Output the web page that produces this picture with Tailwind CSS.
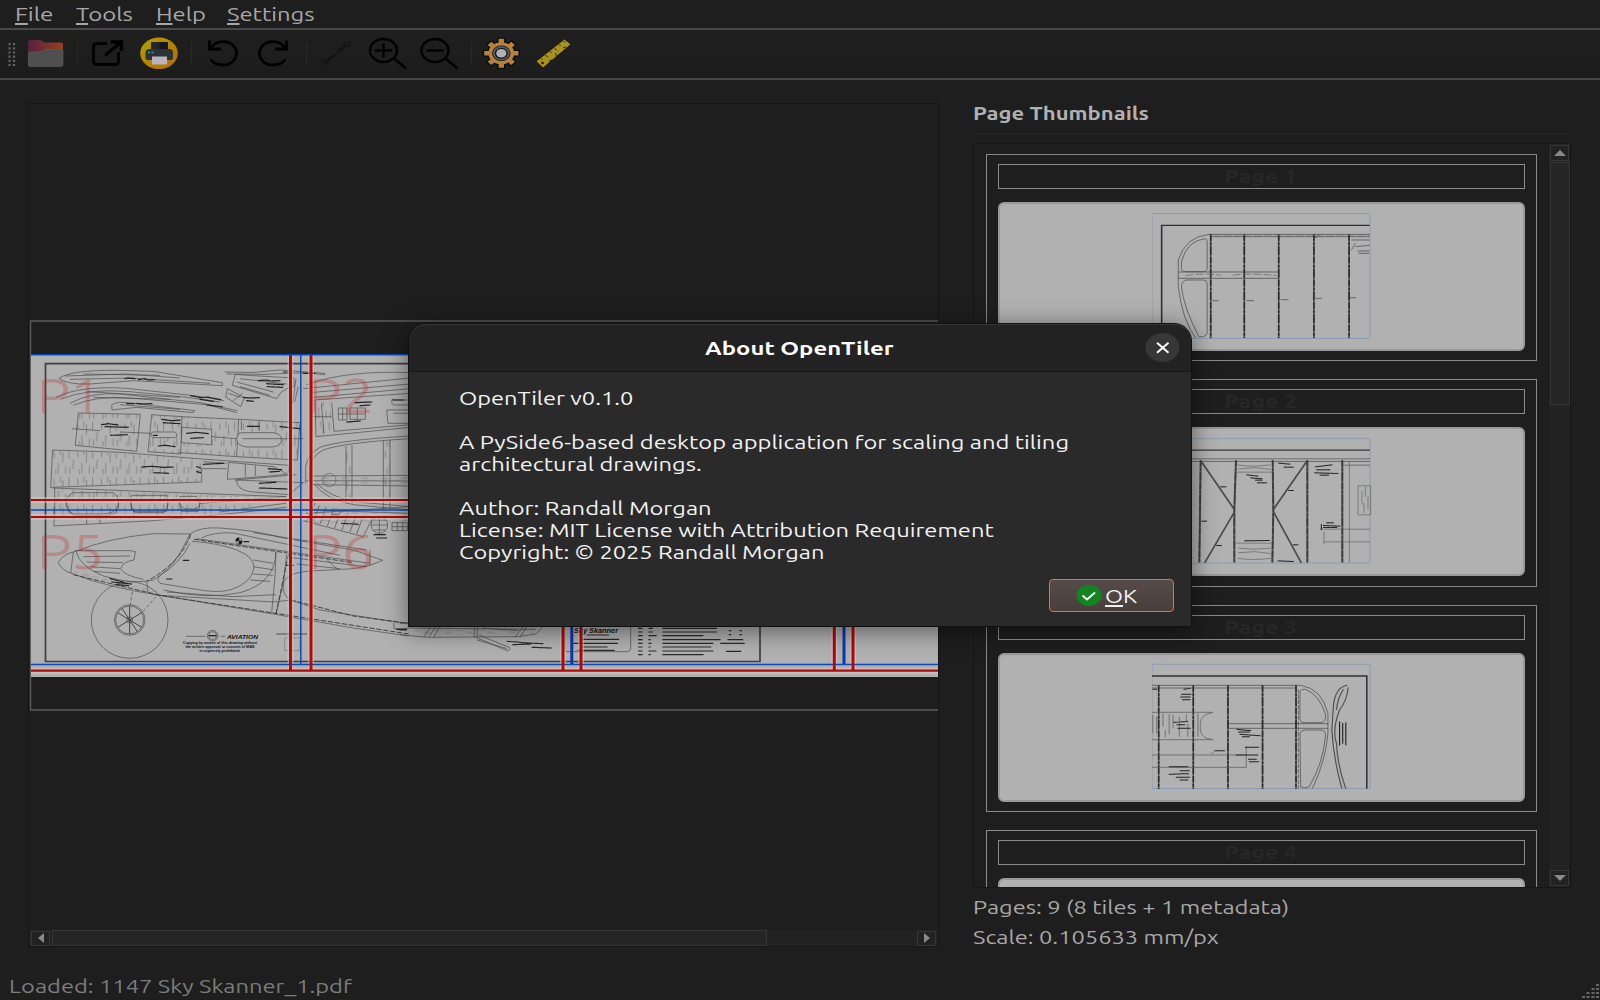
<!DOCTYPE html>
<html lang="en">
<head>
<meta charset="utf-8">
<title>OpenTiler</title>
<script src="https://cdn.jsdelivr.net/npm/@tailwindcss/browser@4"></script>
</head>
<body class="relative flex h-[1000px] w-[1600px] flex-col overflow-hidden bg-[#1e1e1e] font-['Ubuntu','Noto_Sans',sans-serif] text-[19px] leading-[22px] text-[#a8a8a8]">

<!-- Menu bar -->
<nav class="flex h-[30px] shrink-0 border-b-2 border-[#484848] pt-[3px] pl-[15px]">
  <div class="w-[61px]"><span class="inline-block origin-left scale-x-[1.28]"><span class="underline decoration-2 underline-offset-2">F</span>ile</span></div>
  <div class="w-[80px]"><span class="inline-block origin-left scale-x-[1.26]"><span class="underline decoration-2 underline-offset-2">T</span>ools</span></div>
  <div class="w-[71px]"><span class="inline-block origin-left scale-x-[1.25]"><span class="underline decoration-2 underline-offset-2">H</span>elp</span></div>
  <div><span class="inline-block origin-left scale-x-[1.25]"><span class="underline decoration-2 underline-offset-2">S</span>ettings</span></div>
</nav>

<!-- Toolbar -->
<div class="flex h-[50px] shrink-0 items-start border-b-2 border-[#484848] bg-linear-to-b from-[#1f1f1f] to-[#1c1c1c] pt-[7px]">
  <svg class="ml-[8px] h-8 w-[8px]" viewBox="8 37 8 32"><g stroke="#626262" stroke-width="2.2" stroke-dasharray="2.2 2"><path d="M9.5 43v23M14 43v23"/></g></svg>
  <svg class="ml-[12px] h-8 w-[36px]" viewBox="28 37 36 32">
    <defs><linearGradient id="fold"><stop offset="0" stop-color="#58203f"/><stop offset="1" stop-color="#96401f"/></linearGradient></defs>
    <path d="M28 42q0-2 2-2h9q2 0 3 1l2 1.500h17q2 0 2 2V58H28z" fill="url(#fold)"/>
    <path d="M28 54q0-2 2-2h9q2 0 4-1.300l2-1.200h16q2 0 2 2V64q0 2.500-2 2.500H30q-2 0-2-2.500z" fill="#4f4f4f" stroke="#606060" stroke-width=".6"/>
  </svg>
  <i class="ml-[13px] mt-[5px] h-[23px] w-px bg-[#292929]"></i>
  <svg class="ml-[14px] h-8 w-[33px]" viewBox="92 37 33 32" fill="none" stroke="#000" stroke-width="3"><path d="M107 43.500H97q-3.500 0-3.500 3.500V61q0 3.500 3.500 3.500h18q3.500 0 3.500-3.500V52"/><path d="M105 55.500L120 43M111 42h10.500v9" stroke-width="3.400"/></svg>
  <svg class="ml-[15px] h-8 w-[38px]" viewBox="140 37 38 32">
    <defs><linearGradient id="coin" x2="1" y2="1"><stop offset="0" stop-color="#b5a000"/><stop offset="1" stop-color="#b46a00"/></linearGradient></defs>
    <ellipse cx="159" cy="53.300" rx="18.800" ry="15.800" fill="url(#coin)"/>
    <path d="M151 42h17v10h-17z" fill="#23272b"/><path d="M145.500 53q0-4 4-4h19.500q4 0 4 4v5q0 2-2 2h-23.500q-2 0-2-2z" fill="#2c3238"/><path d="M159.500 42h8.500v7h-8.500z" fill="#14171b"/>
    <path d="M152 56.500h15v8h-15z" fill="#b7b5bb"/><path d="M148 52.500h2M151.500 52.500h2" stroke="#2ba5a5" stroke-width="1.300"/>
  </svg>
  <i class="ml-[13px] mt-[5px] h-[23px] w-px bg-[#292929]"></i>
  <svg class="ml-[14px] h-8 w-[34px]" viewBox="206 37 34 32" fill="none" stroke="#000" stroke-width="2.800"><path d="M209.500 40.500V49H221"/><path d="M210.500 48C214 43.500 218 41.700 223 41.700c8 0 13.500 5.300 13.500 11.500S231 65 223 65c-5.500 0-10-2-12.500-5.500"/></svg>
  <svg class="ml-[16px] h-8 w-[34px]" viewBox="256 37 34 32" fill="none" stroke="#000" stroke-width="2.800"><path d="M286.500 40.500V49H275"/><path d="M285.500 48C282 43.500 278 41.700 273 41.700c-8 0-13.500 5.300-13.500 11.500S265 65 273 65c5.500 0 10-2 12.500-5.500"/></svg>
  <i class="ml-[16px] mt-[5px] h-[23px] w-px bg-[#292929]"></i>
  <svg class="ml-[13px] h-8 w-[32px]" viewBox="320 37 32 32" fill="none" stroke="#131313"><path d="M325 62L335 54.500M337 52.500L347 44.500" stroke-width="2.400"/><path d="M322 58.500v5.500h6.500zM343 42.500l7-.5-.5 6z" stroke-width="1"/></svg>
  <svg class="ml-[16px] h-8 w-[40px]" viewBox="368 37 40 32" fill="none" stroke="#000" stroke-width="2.400"><ellipse cx="383.500" cy="50.500" rx="13.500" ry="11.500"/><path d="M394 58.500l12 10"/><path d="M375 50.500h17M383.500 43.500v14"/></svg>
  <svg class="ml-[11px] h-8 w-[40px]" viewBox="418.500 37 40 32" fill="none" stroke="#000" stroke-width="2.400"><ellipse cx="434.500" cy="50.500" rx="13.500" ry="11.500"/><path d="M445 58.500l12 10"/><path d="M426 50.500h17"/></svg>
  <i class="ml-[12px] mt-[5px] h-[23px] w-px bg-[#292929]"></i>
  <svg class="ml-[11px] h-8 w-[38px]" viewBox="483 37 38 32">
    <g transform="translate(501.300 53.300) scale(1.180 1)">
      <g stroke="#090909" stroke-width="6.500"><path d="M0-15.500V15.500M-15.500 0H15.500M-10.800-10.800L10.800 10.800M10.800-10.800L-10.800 10.800"/></g>
      <circle r="12.200" fill="#090909"/>
      <g stroke="#b5813b" stroke-width="4.500"><path d="M0-14.500V14.500M-14.500 0H14.500M-10-10L10 10M10-10L-10 10"/></g>
      <circle r="11" fill="#b5813b"/><circle r="7.800" fill="#14171c"/><circle r="6.300" fill="none" stroke="#565d6b" stroke-width="1.500"/><circle r="4.300" fill="#b1b1b1"/>
    </g>
  </svg>
  <svg class="ml-[13px] h-8 w-[38px]" viewBox="534 37 38 32"><path d="M536 61.300L564.500 39l6.500 5.300L543 68z" fill="#a8921d" stroke="#0c0c0c" stroke-width=".8"/><path d="M541 58.500l1.500 1.500M545.500 55l2.500 2.500M550 51.500l1.500 1.500M554.500 48l2.500 2.500M559 44.500l1.500 1.500M563.500 41l1.500 1.500M549 61l3-1M556.500 56.500l-1-3.500M563 48l3-1" stroke="#191604" stroke-width=".9"/><circle cx="542.500" cy="63" r="1.300" fill="#191604"/></svg>
</div>

<!-- Work area -->
<main class="flex h-[884px] shrink-0">
  <!-- Drawing view -->
  <section class="mt-[23px] ml-[28px] flex h-[844px] w-[911px] flex-col border border-[#151515]">
    <svg class="h-[826px] w-[909px] shrink-0" viewBox="29 104 909 826" fill="none">
      <defs>
        <pattern id="grainV" width="71" height="83" patternUnits="userSpaceOnUse"><path d="M5 4v26M19 34l-2 28M31 8l1 20M44 44v32M58 12l-1 30M8 56v20M66 54v22M36 62v16M50 2v18" stroke="#555" stroke-width="1.500"/></pattern>
        <pattern id="grainH" width="60" height="14" patternUnits="userSpaceOnUse"><path d="M2 3q14-3 27 0M34 8q10-3 22 0M8 12h14" stroke="#777" stroke-width="1.200"/></pattern>
      </defs>
      <path d="M938 321H30.500V710H938" stroke="#5c5c5c" stroke-width="1.400"/>
      <path d="M31 355H938V677H31z" fill="#b1b1b1"/>
      <path d="M45.500 661.500V363.700H760V661.500z" stroke="#3f3f3f" stroke-width="1.700"/>
      <!-- upper sheet: wing and fuselage parts -->
      <g transform="translate(20 310) scale(.33333)" stroke="#444" stroke-width="1.900">
        <path d="M117 205Q150 180 290 181L400 184 607 218V227L340 212 210 222Q140 224 117 205zM135 198L320 192 480 204M150 208L330 204 570 220M190 192L420 196" fill="none"/>
        <path d="M108 262Q180 226 320 235L530 258 612 272M122 268Q200 234 330 245L500 262 600 276M150 280Q210 246 300 252L540 278 652 302M160 286Q230 256 330 264L560 284 650 308M200 245L480 262M220 262L450 268M275 285Q290 272 340 280L525 302 520 308 350 292 276 300zM300 284L480 298"/>
        <path d="M614 186Q700 192 780 180L916 190M620 192Q730 196 850 188L915 194M646 193L637 226 770 266 782 248 808 232 822 230V204L700 197zM660 206L800 222M650 216L760 246M660 230L750 256M622 236L673 263 662 290 617 261zM625 250L662 262M640 272L668 250M828 206L818 280M835 230L824 275"/>
        <path d="M175 309L361 313 350 424 166 406zM155 356L240 362M300 366L395 370M395 314L486 320 482 432 384 425zM484 320L656 328 650 440 478 428M656 328L840 338 832 450 650 440"/>
        <path d="M175 309L361 313 350 424 166 406zM395 314L486 320 482 432 384 425zM484 320L840 335 832 450 478 428zM98 420L545 447V516L92 532zM885 270L935 278 942 364 888 380z" fill="url(#grainV)" stroke="none"/>
        <path d="M398 366H465Q476 374 465 383H398Q388 374 398 366zM486 352L575 358V404L484 398zM575 380L650 386M664 368H760Q788 372 784 394 778 412 750 411H680Q652 408 650 388 650 372 664 368zM668 386H850M664 332V360M718 334V362" fill="#b1b1b1"/>
        <path d="M98 420L300 427 545 447 808 466M98 420L92 532 545 516V476H620M626 457L622 508 750 498 804 492 806 472M676 463V500M706 466V498M626 457L760 470 800 492M646 510L830 494M650 512Q650 538 690 545L806 554 850 518 646 510M550 455L620 460"/>
        <path d="M98 534L800 560M104 534V628M160 548H280Q300 560 294 590 280 612 250 612H160Q138 600 138 580 140 555 160 548zM335 556H440Q448 580 440 604H340Q328 580 335 556zM480 560H530Q545 580 535 604H485Q475 580 480 560zM540 580L796 560V580L600 606M560 570L640 574"/>
        <path d="M98 536L560 556 800 562 640 602 500 620 300 630H104z" fill="url(#grainV)" stroke="none"/>
        <!-- tail and ribs beneath the second tile -->
        <path d="M860 224Q980 180 1170 188M850 236L1170 204M870 248L1170 222M880 262L1170 236M885 270L1170 250M885 270L888 380L1170 352M935 278L942 364 1170 344M904 280L912 370M880 320H935M1100 300H1170V340H1104zM1120 310H1170M1115 270H1170M1120 285Q1110 275 1120 265M1120 285H1170"/>
        <path d="M955 294h26v36h-26zM990 294h46v34h-46zM955 312h80M968 294v36M1012 294v34"/>
        <path d="M857 520V470Q865 430 900 412 960 390 1170 378M868 510V470Q876 438 910 420 970 398 1170 386M866 498L1170 496M860 512L1170 513M872 524L1170 528M880 520Q920 570 1000 584L1170 600M890 520Q930 562 1010 576L1170 590M978 408V580M996 406V580M1090 392V600M1110 390V600"/>
        <path d="M866 498H1170V528H866zM885 588L1170 606V640H870z" fill="url(#grainH)" stroke="none"/>
        <path d="M978 408h18v172h-18zM1090 392h20v208h-20z" fill="url(#grainV)" stroke="none"/>
        <circle cx="928" cy="510" r="20" stroke-width="1.400"/>
        <g stroke="#222" stroke-width="3.600" stroke-dasharray="6 1.500 9 1 3 2 12 1" stroke-linecap="round">
          <path d="M315 206l10-2 20 2M355 209l18-3 12 4 18-1M350 280l20 2 26-1M715 212l20-2 20 3 25-1M740 221l50 3M742 230l46 2M670 262l18 2 30-1M680 272l20 2M512 257l30 6 20-2 40 8M540 268l40 6M560 285l46 5M320 281h24M245 344l20-3 30 4M255 350l70 2M272 376l50-2M425 328l30 4 26-2M430 338l50 3M400 376h12M415 408l20-2 30 4M500 370l30-3 35 4M512 385l38-2M365 471l30-2 35 3 30-1M402 488l44 2M550 463l60-3M530 470l12 4M530 485l12 3M682 349h36M780 350l60 6M718 520l50-3M718 534l84 3M1005 278l50-2M1020 287l30-2M980 336l42-3M850 190h34M790 186h14M1120 270h30M745 476l40 3M748 486l30-2"/>
        </g>
      </g>
      <!-- lower sheet: fuselage side view -->
      <g transform="translate(20 500) scale(.33333)" stroke="#444" stroke-width="1.900">
        <path d="M102 20V78L400 62 640 40 800 22M140 8Q140 44 170 46H265Q300 40 296 8M334 8Q330 36 350 38H430Q446 26 442 8M478 8Q485 26 500 27H525Q540 22 540 8M200 46v27M240 46v24"/>
        <path d="M850 62L1030 110 1060 48M860 62L886 8M858 40L1170 20M880 30L1165 40M880 66l18-50M900 72l18-50M922 78l18-50M944 84l18-50M966 90l18-50M990 96l18-50M1010 102l18-50" />
        <path d="M115 188Q130 160 168 154 260 115 400 101L510 102Q540 80 600 84 700 90 780 112L1000 150 1088 181 1050 196 1000 206 890 212Q800 214 790 250 785 285 812 300L900 330 1166 372M115 188Q125 212 160 222 260 262 420 286L760 342 1000 384 1166 408M168 154Q180 200 250 228L300 240Q350 250 400 240 450 210 480 160L510 102M165 152H330L346 155 342 180Q310 184 302 206 310 226 370 238M160 156L152 220M190 170L330 168M200 186L310 188M210 200L300 206M220 214L300 220"/>
        <path d="M516 124Q600 130 650 150 704 170 702 204 695 250 630 270 590 280 530 268L420 250Q408 240 420 226 480 190 510 130M430 270Q560 300 660 278 765 250 768 156M530 116L1050 190M545 114Q580 95 640 99L960 166M700 98L1040 150M420 286L760 306 812 300M440 276L640 290 768 284M768 156L765 230 755 338M800 164L790 250 768 342M700 180L760 190M700 200L762 210M700 222L758 226M690 240L750 244M806 172L1040 200M830 192L960 206M920 178L950 206M1050 150V196M380 245L384 276Q400 286 420 286"/>
        <g stroke="#3a3a3a" stroke-width="2.800" stroke-dasharray="16 5"><path d="M512 104Q480 190 380 244M522 118L1000 188M160 224L420 286 1166 402M812 300L1000 348 1166 370M768 342L806 160"/></g>
        <path d="M160 220L300 262 420 288 430 274 300 248 170 210z" fill="url(#grainH)" stroke="none"/>
        <circle cx="329" cy="360" r="115"/><circle cx="329" cy="360" r="46"/><circle cx="329" cy="360" r="42"/><circle cx="329" cy="360" r="9"/>
        <path d="M329 318V402M293 338L365 382M293 382L365 338M306 325L352 395" stroke-width="3"/><path d="M337 276L330 320M408 290L364 340" stroke-dasharray="10 6"/>
        <circle cx="657" cy="123" r="9" fill="#b1b1b1"/><path d="M657 123V113A10 10 0 0 0 647 123zM657 123V133A10 10 0 0 0 667 123z" fill="#000"/>
        <circle cx="1078" cy="75" r="25"/><path d="M1053 75h50M1078 50v50M1060 60h36M1060 90h36M1116 68h46v24h-46zM1116 80h46M1132 68v24M1148 68v24"/>
        <path d="M794 414h46v38h-46z" stroke="#777"/><path d="M1122 368v18h40"/>
        <circle cx="578" cy="407" r="16"/><circle cx="578" cy="407" r="12"/><path d="M566 407h24M498 409h58M602 409h14"/>
        <g stroke="#222" stroke-width="3.400" stroke-dasharray="6 1.500 9 1 3 2 12 1" stroke-linecap="round"><path d="M672 125h14M935 44h20M965 70l50 3M1062 104h34M1070 114h30M270 236l40 10M275 246l60 6M290 254l36 3M440 237h16M490 181h16M800 196h22M568 407h20M1130 388h30"/><path d="M770 402h90" stroke-width="2"/></g>
      </g>
      <g fill="#111" font-family="Liberation Sans" font-weight="700" text-anchor="middle">
        <text x="242.500" y="638.500" font-size="6" font-style="italic" textLength="31" lengthAdjust="spacingAndGlyphs">AVIATION</text>
        <text x="220" y="644" font-size="3.600" textLength="74" lengthAdjust="spacingAndGlyphs">Copying by means of this drawing without</text>
        <text x="220" y="648.200" font-size="3.600" textLength="69" lengthAdjust="spacingAndGlyphs">the written approval or consent of MAN</text>
        <text x="220" y="652.400" font-size="3.600" textLength="41" lengthAdjust="spacingAndGlyphs">is expressly prohibited.</text>
      </g>
      <!-- title block and rear fuselage -->
      <g transform="translate(400 600) scale(.35714 .33333)" stroke="#444" stroke-width="1.900">
        <path d="M0 70L90 60 240 62 410 70 380 102 330 110 80 112 0 104M20 84L380 88M88 76L68 110M112 78L94 112M102 76L82 110M208 70V112M216 72V112M345 80L322 112M356 78L336 112M212 112L300 152Q312 150 306 142L222 106M216 120L300 146M230 84L330 92M462 150V60M462 150Q462 155 470 155H636Q646 154 646 144V60"/>
        <path d="M20 78L380 86 370 104 80 108z" fill="url(#grainH)" stroke="none"/>
        <g stroke="#2a2a2a" stroke-width="3.400" stroke-dasharray="6 1.500 9 1 3 2 12 1" stroke-linecap="round"><path d="M300 124l30 2 30 4M316 134l50-2M340 128l60 3M370 142l54 2M524 105h60M512 118h100M486 130h124M506 141h74M498 151h102M0 90h18"/>
        <path d="M668 85h10M668 96h10M668 107h10M668 119h10M668 130h10M668 141h10M668 153h10M668 164h10M697 85h10M697 96h10M697 107h22M697 119h4M697 130h6M697 141h4M697 153h20M697 164h4M736 85h150M736 96h150M736 107h112M736 119h160M736 130h140M736 141h134M736 153h140M736 164h114M918 119h42M898 130h66M914 154h40M922 92h4M952 92h4M922 104h4M952 104h4"/></g>
      </g>
      <text x="574" y="632.800" fill="#111" font-family="Liberation Sans" font-weight="700" font-style="italic" font-size="7" textLength="44" lengthAdjust="spacingAndGlyphs">Sky Skanner</text>
      <!-- tile labels -->
      <g fill="#c02020" fill-opacity=".27" font-family="Ubuntu, Noto Sans" font-size="48">
        <text x="37" y="413" textLength="64" lengthAdjust="spacingAndGlyphs">P1</text>
        <text x="307" y="413" textLength="67" lengthAdjust="spacingAndGlyphs">P2</text>
        <text x="37" y="569" textLength="67" lengthAdjust="spacingAndGlyphs">P5</text>
        <text x="307" y="569" textLength="67" lengthAdjust="spacingAndGlyphs">P6</text>
      </g>
      <!-- tile boundaries -->
      <g stroke="#d2d0cc" stroke-opacity=".5" stroke-width="6"><path d="M31 500H938M31 517H938M31 671H938M290.500 355V671M311 355V671M563 355V671M581 355V671M834.300 355V671M853 355V671"/></g>
      <g stroke="#0b49b8" stroke-width="1.500"><path d="M31 354.700H938M31 510H938M31 664.400H938M300.800 355V664"/><path d="M571.800 355V664M844 355V664" stroke="#0838b8" stroke-width="3"/></g>
      <g stroke="#b80505" stroke-width="3"><path d="M290.500 355V670M311 355V670M563 355V670M581 355V670M834.300 355V670M853 355V670"/><path d="M31 500H938M31 517H938M31 670.600H938" stroke-width="2.200"/></g>
    </svg>
    <div class="flex h-4 shrink-0 items-center bg-[#222] pl-[2px]">
      <div class="flex h-[15px] w-[19px] items-center justify-center border border-[#363636]"><svg class="h-3 w-2" viewBox="0 0 8 12"><path d="M7 1v10L1 6z" fill="#8a8a8a"/></svg></div>
      <div class="ml-[2px] h-4 w-[715px] border border-[#363636] bg-[#252525]"></div>
      <div class="mr-[2px] ml-auto flex h-[15px] w-[19px] items-center justify-center border border-[#363636]"><svg class="h-3 w-2" viewBox="0 0 8 12"><path d="M1 1v10l6-5z" fill="#8a8a8a"/></svg></div>
    </div>
  </section>

  <!-- Thumbnails -->
  <aside class="mt-[22px] ml-[34px] w-[598px]">
    <h2 class="h-[32px] border-b border-[#282828] font-bold text-[#b1b1b1]"><span class="inline-block origin-left scale-x-[1.161]">Page Thumbnails</span></h2>
    <div class="mt-[9px] flex h-[745px] overflow-hidden border border-[#161616]">
      <div class="flex flex-col gap-[18px] pt-[10px] pl-[12px]">
        <article class="h-[207.400px] w-[551px] shrink-0 border-[1.500px] border-[#8b8b8b] px-[11px] pt-[9px]">
          <h3 class="h-[25px] border border-[#8b8b8b] text-center font-bold text-[#272727]"><span class="inline-block -translate-x-px scale-x-[1.226]">Page 1</span></h3>
          <div class="mt-[13px] flex h-[149px] justify-center rounded-[6px] border-2 border-[#999] bg-[#b1b1b1] pt-[8px]">
            <svg class="h-[127px] w-[220px]" viewBox="1152 212 220 127" fill="none">
              <path d="M1152 213.500H1370V338.500H1152z" stroke="#8b9cb5"/>
              <g transform="translate(960 90) scale(.39541 .33333)" stroke="#4a4a4a" stroke-width="2">
                <path d="M510 745V406H1036" stroke="#303030" stroke-width="4"/>
                <path d="M630 433H1036M634 440H1036M630 433Q570 440 552 510V590Q562 690 596 744M622 446Q574 450 560 515V536Q560 545 572 545H614Q625 545 625 534V456Q625 446 622 446M552 546H806M552 565H806M574 570H616Q625 570 625 580V730Q622 742 604 740 565 650 560 590 562 570 574 570"/>
                <path d="M634 433V744M719 433V744M806 433V744M895 433V744M984 433V744" stroke="#555" stroke-width="4"/><path d="M634 433V744M719 433V744M806 433V744M895 433V744M984 433V744" stroke="#2c2c2c" stroke-width="4" stroke-dasharray="19 5 8 4 26 6"/>
                <path d="M570 557Q620 548 660 556M690 556Q730 548 800 557M640 435H1036" stroke="#666" stroke-dasharray="20 6"/>
                <path d="M638 632h16M724 632h20M811 629h20M899 625h16M986 623h16M990 450h46M1000 470l36-4M1005 483h30M1008 490h28M895 444q12-2 14-10M990 480l10-20"/>
              </g>
            </svg>
          </div>
        </article>
        <article class="h-[207.400px] w-[551px] shrink-0 border-[1.500px] border-[#8b8b8b] px-[11px] pt-[9px]">
          <h3 class="h-[25px] border border-[#8b8b8b] text-center font-bold text-[#272727]"><span class="inline-block -translate-x-px scale-x-[1.226]">Page 2</span></h3>
          <div class="mt-[13px] flex h-[149px] justify-center rounded-[6px] border-2 border-[#999] bg-[#b1b1b1] pt-[8px]">
            <svg class="h-[127px] w-[220px]" viewBox="1152 437.500 220 127" fill="none">
              <path d="M1152 439.200H1370V563.500H1152z" stroke="#8b9cb5"/>
              <g transform="translate(1180 370) scale(.33333)" stroke="#4a4a4a" stroke-width="2">
                <path d="M-80 242H570" stroke="#3a3a3a" stroke-width="4"/><path d="M-80 268H570M-80 276H570M490 287H570"/>
                <path d="M62 272L58 580M168 272L163 420V580M278 272L280 420 277 580M382 272V580M487 272V580" stroke="#555" stroke-width="6"/>
                <path d="M62 272L58 580M168 272L163 420V580M278 272L280 420 277 580M382 272V580M487 272V580" stroke="#383838" stroke-width="4.500" stroke-dasharray="19 5 8 4 26 6"/>
                <path d="M64 276L163 420M380 276L280 420M163 428L74 580M281 428L364 580" stroke-width="5"/>
                <path d="M168 308H278M168 521H276M172 286q40 8 100 0M175 298q50-8 98 2M176 536q50 6 96 0M174 550q50-8 98 2M172 566q40 8 104 0M420 479H570M432 517H570M432 486V525M534 349H572V436H534zM546 365v40M556 352v30M552 400v30M564 380v40M508 276V580" stroke="#606060"/>
                <g stroke="#222" stroke-width="3" stroke-dasharray="6 1.500 9 1 3 2 12 1" stroke-linecap="round"><path d="M200 316l34 4M212 325l34 3M226 332h22M232 340h28M296 281l34 3M312 293h28M406 292l50-6M410 301h40M404 310l70 2M420 317h26M194 514l74-1M440 460h20M430 468l50 2M430 474h40M424 465v16M66 455h14M122 352h16M326 363h14M110 528h14M340 526h14M294 574l46 2"/></g>
              </g>
            </svg>
          </div>
        </article>
        <article class="h-[207.400px] w-[551px] shrink-0 border-[1.500px] border-[#8b8b8b] px-[11px] pt-[9px]">
          <h3 class="h-[25px] border border-[#8b8b8b] text-center font-bold text-[#272727]"><span class="inline-block -translate-x-px scale-x-[1.226]">Page 3</span></h3>
          <div class="mt-[13px] flex h-[149px] justify-center rounded-[6px] border-2 border-[#999] bg-[#b1b1b1] pt-[8px]">
            <svg class="h-[127px] w-[220px]" viewBox="1152 663 220 127" fill="none">
              <path d="M1152 664.300H1370V788.500H1152z" stroke="#8b9cb5"/>
              <g transform="translate(970 600) scale(.38903 .33333)" stroke="#4a4a4a" stroke-width="2">
                <path d="M467 228H1020V566" stroke="#303030" stroke-width="4"/>
                <path d="M467 256H850Q905 266 920 340V400Q915 480 880 566M467 264H835M848 276Q848 268 862 268 900 285 914 345 916 368 900 368H860Q848 368 848 355zM664 371H920M664 385H920M862 390H900Q914 390 914 405 908 490 872 560 860 568 850 560L848 400Q850 390 862 390"/>
                <path d="M485 256V566M574 256V566M663 256V566M752 256V566M838 256V566" stroke="#555" stroke-width="4"/><path d="M485 256V566M574 256V566M663 256V566M752 256V566M838 256V566" stroke="#2c2c2c" stroke-width="4" stroke-dasharray="19 5 8 4 26 6"/>
                <path d="M844 268V566" stroke-dasharray="12 4"/>
                <path d="M970 256Q938 262 934 320L930 390Q935 480 956 566M972 262Q970 300 950 330 930 390 942 430 945 500 966 566M960 268Q946 290 942 330" stroke="#505050" stroke-width="3"/>
                <path d="M467 337H624Q592 345 592 370V390Q594 415 624 419H467M467 465H710M467 502H710V440M620 462l8-8M470 345v55M480 350v50M496 340v40M502 390v22M512 342v60M522 345v40M538 350v60M556 342v22M560 370v40M586 340v70" stroke="#5a5a5a"/>
                <g stroke="#222" stroke-width="3" stroke-dasharray="6 1.500 9 1 3 2 12 1" stroke-linecap="round"><path d="M470 268h10M550 268l16-3M544 283h24M542 291h24M546 299h20M524 367l36-3M532 374h20M534 385h32M686 388l36 4M690 396h28M694 403l52 4M700 410h18M630 452h24M708 442h34M684 465h56M716 478h20M718 485h24M512 500h48M540 512h24M512 523l50-2M530 532h34M540 540h20M950 365v70M958 370v60M966 368v66"/></g>
              </g>
            </svg>
          </div>
        </article>
        <article class="h-[207.400px] w-[551px] shrink-0 border-[1.500px] border-[#8b8b8b] px-[11px] pt-[9px]">
          <h3 class="h-[25px] border border-[#8b8b8b] text-center font-bold text-[#272727]"><span class="inline-block -translate-x-px scale-x-[1.226]">Page 4</span></h3>
          <div class="mt-[13px] h-[149px] rounded-[6px] border-2 border-[#999] bg-[#b1b1b1]"></div>
        </article>
      </div>
      <div class="ml-auto flex w-[21px] flex-col items-center bg-[#222] pt-px pb-px">
        <div class="flex h-[16px] w-[19px] shrink-0 items-center justify-center border border-[#363636]"><svg class="h-[6px] w-3" viewBox="0 0 12 6"><path d="M0 6h12L6 0z" fill="#8a8a8a"/></svg></div>
        <div class="mt-px h-[243px] w-5 shrink-0 border border-[#363636] bg-[#252525]"></div>
        <div class="mt-auto flex h-[16px] w-[19px] shrink-0 items-center justify-center border border-[#363636]"><svg class="h-[6px] w-3" viewBox="0 0 12 6"><path d="M0 0h12L6 6z" fill="#8a8a8a"/></svg></div>
      </div>
    </div>
    <p class="mt-[8px]"><span class="inline-block origin-left scale-x-[1.245] whitespace-nowrap">Pages: 9 (8 tiles + 1 metadata)</span></p>
    <p class="mt-[8px]"><span class="inline-block origin-left scale-x-[1.245] whitespace-nowrap">Scale: 0.105633 mm/px</span></p>
  </aside>
</main>

<!-- Status bar -->
<footer class="flex h-[36px] shrink-0 items-start justify-between pt-[11px] pl-[9px] text-[#7c7c7c]">
  <span class="inline-block origin-left scale-x-[1.245] whitespace-nowrap">Loaded: 1147 Sky Skanner_1.pdf</span>
  <svg class="mt-[8px] h-[16px] w-[19px]" viewBox="0 0 19 16" fill="#666"><path d="M15 1h3v2h-3zM10.500 5h3v2h-3zM15 5h3v2h-3zM5.500 9h3v2h-3zM10.500 9h3v2h-3zM15 9h3v2h-3zM1 13h3v2H1zM5.500 13h3v2h-3zM10.500 13h3v2h-3zM15 13h3v2h-3z"/></svg>
</footer>

<!-- About dialog -->
<div role="dialog" class="absolute top-[323px] left-[408px] flex h-[304px] w-[784px] flex-col overflow-visible rounded-t-[18px] border border-[#101010] bg-[#2a2a2a] text-[#f2f2f2] shadow-[0_4px_24px_rgba(0,0,0,0.5)]">
  <header class="flex h-[48px] shrink-0 items-center justify-end rounded-t-[17px] border-t border-b border-t-[#373737] border-b-[#181818] bg-[#222] pr-[11px] font-bold text-white">
    <span class="mr-[293px] w-[147px] origin-left scale-x-[1.256] whitespace-nowrap">About OpenTiler</span>
    <svg class="h-[30px] w-[35px]" viewBox="0 .5 35 30"><ellipse cx="17.500" cy="15" rx="17" ry="14.500" fill="#373737"/><path d="M12 10.200l11.500 10M23.500 10.200L12 20.200" stroke="#fff" stroke-width="1.900"/></svg>
  </header>
  <div class="pt-[15px] pl-[50px] whitespace-nowrap leading-[22.100px]">
    <p><span class="inline-block origin-left scale-x-[1.24]">OpenTiler v0.1.0</span></p>
    <p class="mt-[22px]"><span class="inline-block origin-left scale-x-[1.248]">A PySide6-based desktop application for scaling and tiling</span></p>
    <p><span class="inline-block origin-left scale-x-[1.247]">architectural drawings.</span></p>
    <p class="mt-[22px]"><span class="inline-block origin-left scale-x-[1.245]">Author: Randall Morgan</span></p>
    <p><span class="inline-block origin-left scale-x-[1.246]">License: MIT License with Attribution Requirement</span></p>
    <p><span class="inline-block origin-left scale-x-[1.242]">Copyright: © 2025 Randall Morgan</span></p>
  </div>
  <button class="mt-auto mr-[17px] mb-[14px] flex h-[33px] w-[125px] items-center self-end rounded-[4px] border-[1.500px] border-[#dd714b] bg-linear-to-b from-[#564b48] to-[#483f3d] pl-[26px]">
    <svg class="h-[22px] w-[26px]" viewBox="0 0 26 22"><ellipse cx="13" cy="10.500" rx="12.500" ry="10.500" fill="#12851f"/><path d="M6.500 10.500l4.500 4 8-7" fill="none" stroke="#fff" stroke-width="2"/></svg>
    <span class="ml-[3px] inline-block origin-left scale-x-[1.22]"><span class="underline decoration-2 underline-offset-2">O</span>K</span>
  </button>
</div>
</body>
</html>
